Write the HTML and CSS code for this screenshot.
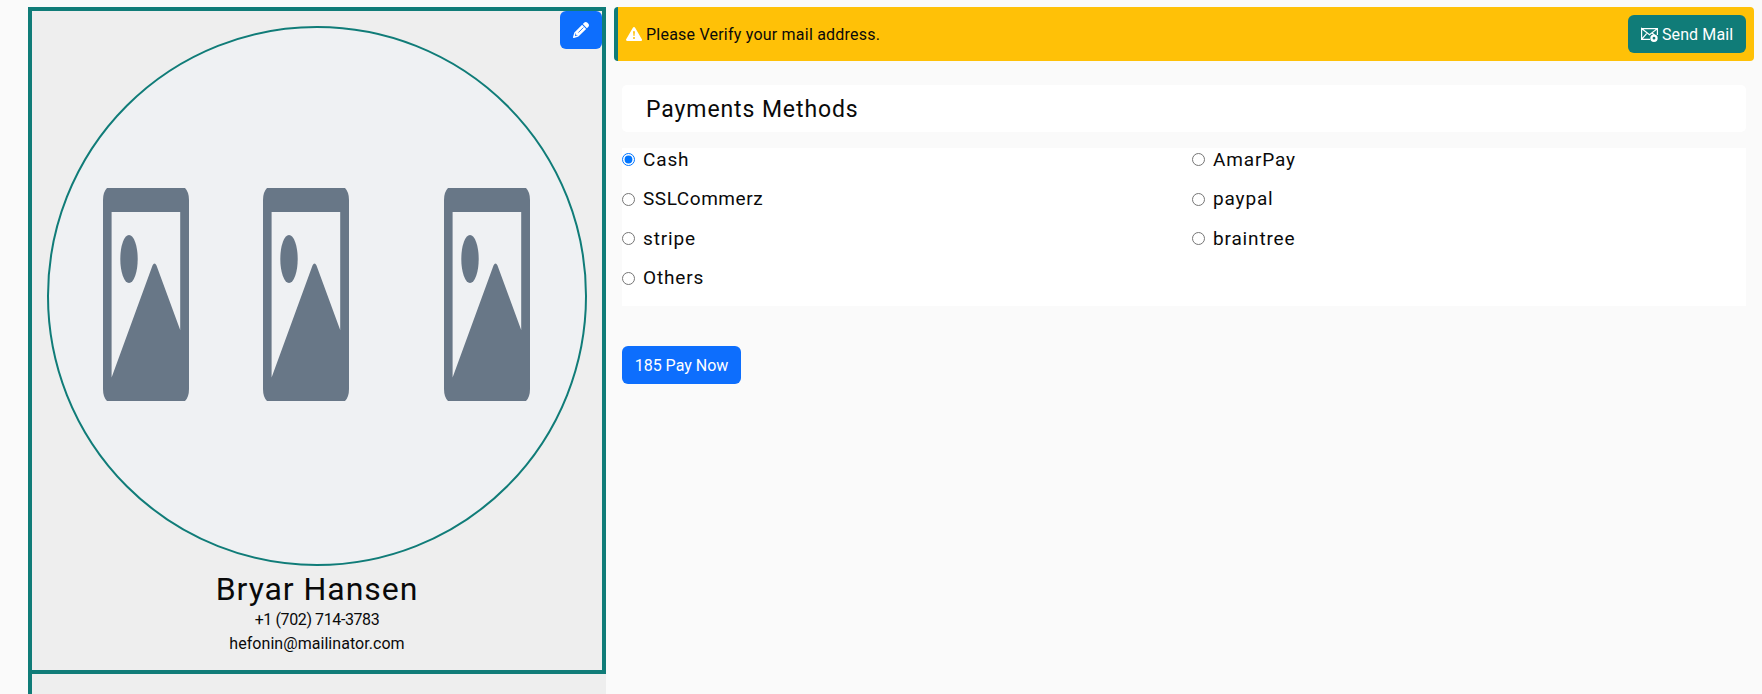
FILE: index.html
```html
<!DOCTYPE html>
<html lang="en">
<head>
<meta charset="utf-8">
<title>Payments Methods</title>
<link rel="stylesheet" href="styles.css">
</head>
<body>
<svg class="defs" aria-hidden="true">
  <symbol id="photo" viewBox="0 0 86 213" preserveAspectRatio="none">
    <path fill-rule="evenodd" d="M4 0H82Q86 4 86 12V201Q86 209 82 213H4Q0 209 0 201V12Q0 4 4 0ZM8.6 24V189.5L49.5 77.5Q51.5 73.500 53.500 77.500L77.200 142V24Z"/>
    <ellipse cx="26" cy="71" rx="8.700" ry="24"/>
  </symbol>
</svg>
<div class="page">
  <aside class="sidebar">
    <section class="profile">
      <button class="edit" aria-label="Edit">
        <svg viewBox="0 0 512 512"><path d="M421.700 220.300L182.800 459.200c-6.600 6.600-14.800 11.500-23.800 14.100L30.800 511c-8.400 2.500-17.500.2-23.700-6.100S-1.500 489.700 1 481.200L38.700 353.100c2.600-9 7.500-17.100 14.100-23.800L291.700 90.300zM96 353.900l-9.300 9.300c-.9.9-1.600 2.100-2 3.400l-25.300 86 86-25.300c1.300-.4 2.500-1.100 3.400-2l9.300-9.300H112c-8.800 0-16-7.200-16-16zM453.300 19.300l39.400 39.400c25 25 25 65.500 0 90.500l-48.400 48.400L314.300 67.700l48.500-48.400c25-25 65.500-25 90.500 0z"/><path class="slit" d="M180 330L324 186"/></svg>
      </button>
      <div class="avatar">
        <svg><use href="#photo"/></svg>
        <svg><use href="#photo"/></svg>
        <svg class="last"><use href="#photo"/></svg>
      </div>
      <h2 class="name">Bryar Hansen</h2>
      <p class="contact phone">+1 (702) 714-3783</p>
      <p class="contact">hefonin@mailinator.com</p>
    </section>
  </aside>
  <main class="main">
    <div class="alert">
      <svg class="warn" viewBox="0 0 16 16"><path d="M8.982 1.566a1.130 1.130 0 0 0-1.960 0L.165 13.233c-.457.778.091 1.767.98 1.767h13.713c.889 0 1.438-.99.98-1.767zM8 5c.535 0 .954.462.9.995l-.35 3.507a.552.552 0 0 1-1.100 0L7.100 5.995A.905.905 0 0 1 8 5m.002 6a1 1 0 1 1 0 2 1 1 0 0 1 0-2"/></svg>
      <span class="alert-text">Please Verify your mail address.</span>
      <button class="send">
        <svg viewBox="0 0 17 16"><path class="line" d="M.6 2.600H16.400V9M9 13.400H.6V2.600L8.500 8.800L16.400 2.600M.6 13.400L6 7.200M11 7L13.500 9"/><path fill-rule="evenodd" d="M13 8.500a3.700 3.700 0 1 0 0 7.400 3.700 3.700 0 0 0 0-7.400m0 2.300a1.400 1.400 0 1 1 0 2.800 1.400 1.400 0 0 1 0-2.800"/></svg>
        <span>Send Mail</span>
      </button>
    </div>
    <h4 class="title">Payments Methods</h4>
    <form class="methods">
      <label><input type="radio" name="method" checked><span>Cash</span></label>
      <label><input type="radio" name="method"><span>AmarPay</span></label>
      <label class="tight"><input type="radio" name="method"><span>SSLCommerz</span></label>
      <label><input type="radio" name="method"><span>paypal</span></label>
      <label><input type="radio" name="method"><span>stripe</span></label>
      <label><input type="radio" name="method"><span>braintree</span></label>
      <label><input type="radio" name="method"><span>Others</span></label>
    </form>
    <button class="pay"><span>185 Pay Now</span></button>
  </main>
</div>
</body>
</html>
```

FILE: styles.css
```css
* { box-sizing: border-box; }
body {
  margin: 0;
  height: 694px;
  overflow: hidden;
  background: #fafafa;
  color: #0a0a0a;
  font-family: Roboto, "Liberation Sans", sans-serif;
  font-size: 16px;
  line-height: 24px;
}
h2, h4, p { margin: 0; font-weight: 400; }
button { font: inherit; color: #fff; border: 0; padding: 0; border-radius: 6px; display: flex; align-items: center; }
button span { padding-top: 1px; }
svg { display: block; fill: currentColor; flex: none; }
.defs { position: absolute; width: 0; height: 0; }
.page { display: flex; gap: 8px; padding: 7px 8px 0 28px; }
.sidebar { width: 578px; height: 687px; background: #eee; border-left: 4px solid #107c78; }
.profile {
  position: relative;
  height: 667px;
  border: solid #107c78;
  border-width: 4px 4px 4px 0;
  padding: 15px 15px 0;
  text-align: center;
}
.edit { position: absolute; top: 0; right: 0; width: 42px; height: 38px; justify-content: center; background: #0d6efd; }
.edit svg { width: 16px; height: 16px; }
.slit { stroke: #0d6efd; stroke-width: 28px; stroke-linecap: round; }
.avatar {
  width: 540px;
  height: 540px;
  border: 2px solid #107c78;
  border-radius: 50%;
  background: #eff1f3;
  color: #687787;
  display: flex;
  gap: 74px;
  padding: 159.500px 0 0 54px;
}
.avatar svg { width: 86px; height: 213px; }
.avatar .last { margin-left: 21px; }
.name { font-size: 32px; line-height: 38px; margin-top: 4px; letter-spacing: .95px; }
.contact { letter-spacing: .05px; }
.phone { letter-spacing: -.4px; }
.main { flex: 1; display: flex; flex-direction: column; align-items: stretch; }
.alert {
  height: 54px;
  display: flex;
  align-items: center;
  background: #ffc107;
  border-left: 4px solid #107c78;
  border-radius: 4px;
  padding: 0 8px;
}
.warn { width: 16px; height: 16px; color: #fff; margin-right: 4px; }
.alert-text { letter-spacing: .22px; padding-top: 1px; }
.send { margin-left: auto; width: 118px; height: 38px; padding-left: 13px; gap: 4px; background: #107c78; letter-spacing: .1px; }
.send svg { width: 17px; height: 16px; }
.line { fill: none; stroke: currentColor; stroke-width: 1.200px; }
.title {
  margin: 24px 8px 16px;
  height: 47px;
  padding: 1px 0 0 24px;
  line-height: 47px;
  background: #fff;
  border-radius: 5px;
  font-size: 23px;
  letter-spacing: .9px;
}
.methods {
  margin: 0 8px;
  height: 158px;
  background: #fff;
  display: grid;
  grid-template-columns: 570px 1fr;
  grid-template-rows: repeat(4, 39.500px);
  font-size: 19px;
  letter-spacing: .85px;
}
.methods label { display: flex; align-items: center; height: 23.500px; gap: 8px; }
.methods .tight { letter-spacing: .55px; }
.methods input { width: 13px; height: 13px; margin: 0; }
.pay { margin: 40px 8px 0; width: 119px; height: 38px; justify-content: center; background: #0d6efd; }
```
